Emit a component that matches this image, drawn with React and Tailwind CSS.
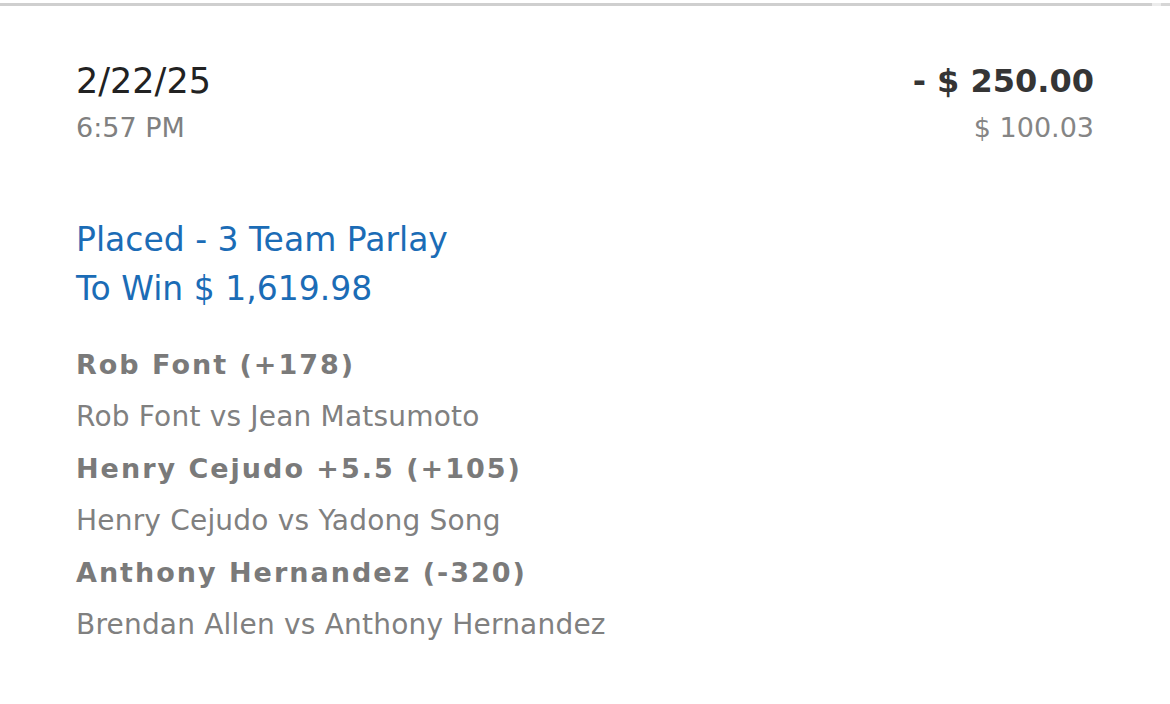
const legs = [
  { pick: "Rob Font (+178)", match: "Rob Font vs Jean Matsumoto" },
  { pick: "Henry Cejudo +5.5 (+105)", match: "Henry Cejudo vs Yadong Song" },
  { pick: "Anthony Hernandez (-320)", match: "Brendan Allen vs Anthony Hernandez" },
];

export default function App() {
  return (
    <div className="w-[1170px] h-[704px] bg-white overflow-hidden" style={{ fontFamily: "'DejaVu Sans', 'Noto Sans', sans-serif" }}>
      {/* top divider */}
      <div className="mt-[3px] flex h-[3px]">
        <div className="flex-1 bg-[#cfcfcf]" />
        <div className="w-[9px] bg-[#ececec]" />
        <div className="w-[9px] bg-[#d6d6d6]" />
      </div>

      <div className="px-[76px] pt-[53px]">
        {/* header */}
        <div className="flex justify-between">
          <div>
            <div className="text-[35px] leading-[44px] text-[#222]">2/22/25</div>
            <div className="text-[27px] leading-[50px] text-[#808080]">6:57 PM</div>
          </div>
          <div className="text-right">
            <div className="text-[32px] leading-[44px] font-bold text-[#353535]">- $ 250.00</div>
            <div className="text-[27px] leading-[50px] text-[#858585]">$ 100.03</div>
          </div>
        </div>

        {/* bet status */}
        <div className="mt-[62px] text-[#1b6cb6] text-[33px] leading-[49px]">
          <div>Placed - 3 Team Parlay</div>
          <div>To Win $ 1,619.98</div>
        </div>

        {/* legs */}
        <div className="mt-[26px]">
          {legs.map((leg) => (
            <div key={leg.pick}>
              <div className="text-[27px] leading-[52px] font-bold tracking-[2px] text-[#7a7a7a]">{leg.pick}</div>
              <div className="text-[28px] leading-[52px] tracking-[0.2px] text-[#808080]">{leg.match}</div>
            </div>
          ))}
        </div>
      </div>
    </div>
  );
}
